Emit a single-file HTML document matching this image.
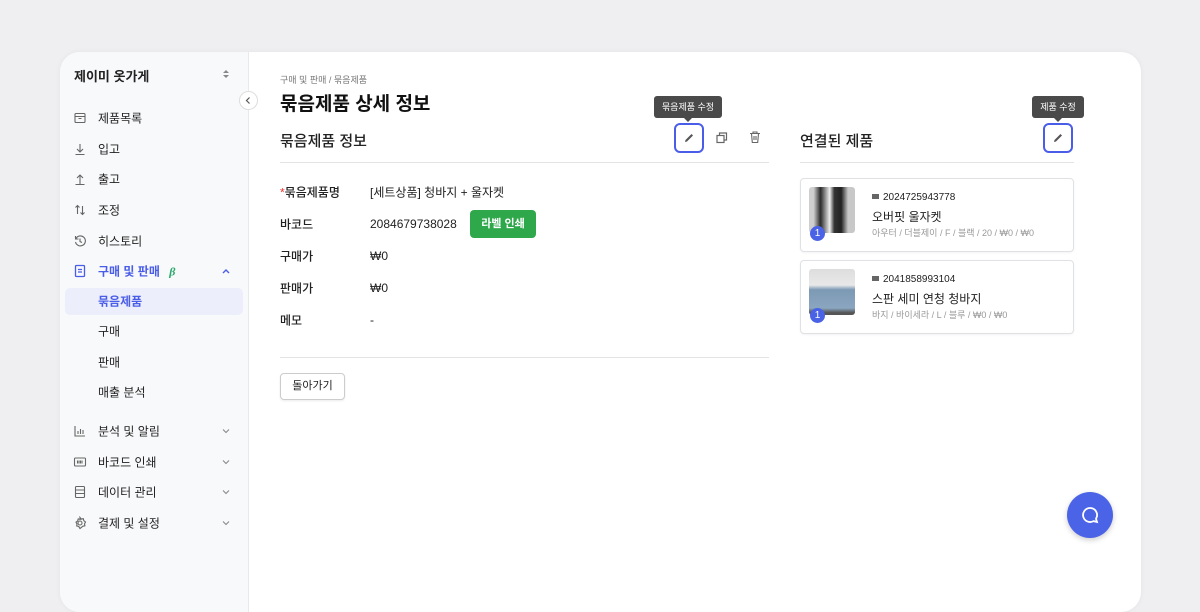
<!DOCTYPE html>
<html><head><meta charset="utf-8"><style>
*{box-sizing:border-box;margin:0;padding:0}
body{width:1200px;height:570px;overflow:hidden;background:#efeff1;font-family:"Liberation Sans","Noto Sans CJK KR",sans-serif;color:#222;position:relative}
.card{position:absolute;left:60px;top:52px;width:1081px;height:560px;background:#fff;border-radius:20px;overflow:hidden;box-shadow:0 0 6px rgba(0,0,0,.05)}
.side{position:absolute;left:0;top:0;width:189px;height:100%;background:#f8f9fb;border-right:1px solid #e8e9ec}
.abs{position:absolute;white-space:nowrap}
.mi{position:absolute;left:38px;font-size:12px;color:#222;transform:translateY(-50%)}
.ic{position:absolute;left:13px;transform:translateY(-50%)}
.chev{position:absolute;left:161px;transform:translateY(-50%)}
.lbl{position:absolute;left:220px;font-size:12px;font-weight:500;transform:translateY(-50%)}
.val{position:absolute;left:310px;font-size:12px;transform:translateY(-50%)}
.pc{position:absolute;left:740px;width:274px;height:74px;border:1px solid #dfe1e5;border-radius:4px;box-shadow:0 1px 2px rgba(0,0,0,.05)}
.img{position:absolute;left:8px;top:8px;width:46px;height:46px;border-radius:3px}
.badge{position:absolute;left:9px;top:47px;width:15px;height:15px;border-radius:50%;background:#4a62e6;color:#fff;font-size:10px;text-align:center;line-height:15px}
.tip{position:absolute;background:#4a4a4a;color:#fff;font-size:9px;border-radius:3px;height:22px;line-height:22px;text-align:center}
.tip:after{content:"";position:absolute;left:50%;bottom:-4px;margin-left:-4px;border:4px solid transparent;border-bottom:0;border-top-color:#4a4a4a}
.eb{position:absolute;width:30px;height:30px;border:2px solid #4a5de8;border-radius:6px}
svg.s path,svg.s rect,svg.s circle{fill:none;stroke:#666;stroke-width:1.1}
</style></head><body>
<div class="card">
<div class="side">
 <div class="abs" style="left:14px;top:14px;font-size:13px;font-weight:bold">제이미 옷가게</div>
 <svg class="abs" style="left:162px;top:16px" width="8" height="12" viewBox="0 0 8 12"><path d="M1 5L4 2L7 5Z M1 7L4 10L7 7Z" fill="#888"/></svg>
 <div class="mi" style="top:66px">제품목록</div><svg class="ic s" style="top:66px" width="14" height="14"><rect x="2" y="2.5" width="10" height="9" rx="1"/><path d="M2 5.5h10M5.5 7.5h3"/></svg>
 <div class="mi" style="top:97px">입고</div><svg class="ic s" style="top:97px" width="14" height="14"><path d="M7 2v8M4 7l3 3 3-3M2.5 12.5h9"/></svg>
 <div class="mi" style="top:127px">출고</div><svg class="ic s" style="top:127px" width="14" height="14"><path d="M7 12V3.5M4 6l3-3 3 3M2.5 12.5h9"/></svg>
 <div class="mi" style="top:158px">조정</div><svg class="ic s" style="top:158px" width="14" height="14"><path d="M4.5 11V2.5M2.5 4.5l2-2 2 2M9.5 3v8.5M7.5 9.5l2 2 2-2"/></svg>
 <div class="mi" style="top:189px">히스토리</div><svg class="ic s" style="top:189px" width="14" height="14"><path d="M3 4.5A5 5 0 1 1 2.5 8M2.5 2v3h3M7 4.5V7.5l2 1"/></svg>
 <div class="mi" style="top:219px;color:#4a5de8;font-weight:bold">구매 및 판매 <i style="color:#2aa86a;font-family:'Liberation Serif',serif;margin-left:6px">β</i></div>
 <svg class="ic" style="top:219px" width="14" height="14"><rect x="2.5" y="1.5" width="9" height="11" rx="1" fill="none" stroke="#4a5de8" stroke-width="1.3"/><path d="M5 5.5h4M5 8h4" stroke="#4a5de8" stroke-width="1.3"/></svg>
 <svg class="chev" style="top:219px" width="10" height="10"><path d="M2 7l3-3 3 3" fill="none" stroke="#4a5de8" stroke-width="1.4"/></svg>
 <div class="abs" style="left:5px;top:236px;width:178px;height:27px;background:#eceefb;border-radius:5px"></div>
 <div class="mi" style="top:249px;color:#4a5de8;font-weight:bold">묶음제품</div>
 <div class="mi" style="top:279px">구매</div>
 <div class="mi" style="top:310px">판매</div>
 <div class="mi" style="top:340px">매출 분석</div>
 <div class="mi" style="top:379px">분석 및 알림</div><svg class="ic s" style="top:379px" width="14" height="14"><path d="M2 2v10h10M5 10V7M7.5 10V5M10 10V6"/></svg>
 <div class="mi" style="top:410px">바코드 인쇄</div><svg class="ic s" style="top:410px" width="14" height="14"><rect x="1.5" y="3" width="11" height="8" rx="1"/><path d="M4.5 5.5v3M6 5.5v3M7.5 5.5v3M9 5.5v3"/></svg>
 <div class="mi" style="top:440px">데이터 관리</div><svg class="ic s" style="top:440px" width="14" height="14"><rect x="2.5" y="1.5" width="9" height="11" rx="1"/><path d="M2.5 5h9M2.5 8.5h9"/></svg>
 <div class="mi" style="top:471px">결제 및 설정</div><svg class="ic s" style="top:471px" width="14" height="14"><circle cx="7" cy="7" r="2"/><path d="M7 1.5l1.3 1.6 2-.4.5 2 1.7 1.3-1 1.8.4 2-2 .4L7 12.5 5.7 10.4l-2-.4.3-2-1-1.8 1.7-1.3.5-2 2 .4Z"/></svg>
 <svg class="chev" style="top:379px" width="10" height="10"><path d="M2 3.5l3 3 3-3" fill="none" stroke="#888" stroke-width="1.1"/></svg>
 <svg class="chev" style="top:410px" width="10" height="10"><path d="M2 3.5l3 3 3-3" fill="none" stroke="#888" stroke-width="1.1"/></svg>
 <svg class="chev" style="top:440px" width="10" height="10"><path d="M2 3.5l3 3 3-3" fill="none" stroke="#888" stroke-width="1.1"/></svg>
 <svg class="chev" style="top:471px" width="10" height="10"><path d="M2 3.5l3 3 3-3" fill="none" stroke="#888" stroke-width="1.1"/></svg>
</div>
<div class="abs" style="left:179px;top:39px;width:19px;height:19px;border-radius:50%;background:#fff;border:1px solid #ddd"></div>
<svg class="abs" style="left:184px;top:44px" width="9" height="9"><path d="M5.5 1.5L2.5 4.5l3 3" fill="none" stroke="#555" stroke-width="1.2"/></svg>

<div class="abs" style="left:220px;top:21px;font-size:9px;color:#777">구매 및 판매 / 묶음제품</div>
<div class="abs" style="left:220px;top:37px;font-size:19px;font-weight:bold;color:#111">묶음제품 상세 정보</div>
<div class="abs" style="left:220px;top:78px;font-size:15px;font-weight:500">묶음제품 정보</div>
<div class="abs" style="left:220px;top:110px;width:489px;height:1px;background:#e2e3e6"></div>
<div class="tip" style="left:594px;top:44px;width:68px">묶음제품 수정</div>
<div class="eb" style="left:614px;top:71px"></div>
<svg class="abs" style="left:622px;top:79px" width="14" height="14" viewBox="0 0 14 14"><path d="M3 11 L3.5 9 L9.5 3 L11 4.5 L5 10.5 Z" fill="#555"/></svg>
<svg class="abs" style="left:655px;top:79px" width="14" height="14" viewBox="0 0 14 14"><rect x="2" y="4.5" width="7" height="7" fill="none" stroke="#666" stroke-width="1.2"/><path d="M4.5 4.5V2h7v7H9" fill="none" stroke="#666" stroke-width="1.2"/></svg>
<svg class="abs" style="left:688px;top:78px" width="14" height="14" viewBox="0 0 14 14"><path d="M2 3.5h10M5 3.5V2h4v1.5M3.5 3.5l.8 9h5.4l.8-9M6 6v4M8 6v4" fill="none" stroke="#666" stroke-width="1.1"/></svg>

<div class="lbl" style="top:140px"><span style="color:#e33">*</span>묶음제품명</div><div class="val" style="top:140px">[세트상품] 청바지 + 울자켓</div>
<div class="lbl" style="top:172px">바코드</div><div class="val" style="top:172px">2084679738028</div>
<div class="abs" style="left:410px;top:158px;width:66px;height:28px;background:#2fa84b;border-radius:4px;color:#fff;font-size:11px;font-weight:bold;text-align:center;line-height:28px">라벨 인쇄</div>
<div class="lbl" style="top:204px">구매가</div><div class="val" style="top:204px">₩0</div>
<div class="lbl" style="top:236px">판매가</div><div class="val" style="top:236px">₩0</div>
<div class="lbl" style="top:268px">메모</div><div class="val" style="top:268px">-</div>
<div class="abs" style="left:220px;top:305px;width:489px;height:1px;background:#e2e3e6"></div>
<div class="abs" style="left:220px;top:321px;width:65px;height:27px;border:1px solid #ccc;border-radius:4px;font-size:11px;text-align:center;line-height:25px;box-shadow:0 1px 2px rgba(0,0,0,.08)">돌아가기</div>

<div class="abs" style="left:740px;top:78px;font-size:15px;font-weight:500">연결된 제품</div>
<div class="abs" style="left:740px;top:110px;width:274px;height:1px;background:#e2e3e6"></div>
<div class="tip" style="left:972px;top:44px;width:52px">제품 수정</div>
<div class="eb" style="left:983px;top:71px"></div>
<svg class="abs" style="left:991px;top:79px" width="14" height="14" viewBox="0 0 14 14"><path d="M3 11 L3.5 9 L9.5 3 L11 4.5 L5 10.5 Z" fill="#555"/></svg>

<div class="pc" style="top:126px"><div class="img" style="background:linear-gradient(90deg,#cfcfcf 10%,#2a2a2a 25%,#eee 45%,#333 55%,#222 70%,#c8c8c8 85%)"></div><div class="badge">1</div>
 <div class="abs" style="left:71px;top:13px;font-size:10px"><span style="display:inline-block;width:7px;height:5px;background:#666;margin-right:4px;vertical-align:1px"></span>2024725943778</div>
 <div class="abs" style="left:71px;top:29px;font-size:12px">오버핏 울자켓</div>
 <div class="abs" style="left:71px;top:47px;font-size:9px;color:#999">아우터 / 더블제이 / F / 블랙 / 20 / ₩0 / ₩0</div></div>
<div class="pc" style="top:208px"><div class="img" style="background:linear-gradient(180deg,#ddd 0%,#e8e8e8 35%,#7d9ab5 45%,#8aa5bf 85%,#555 95%),#ccc"></div><div class="badge">1</div>
 <div class="abs" style="left:71px;top:13px;font-size:10px"><span style="display:inline-block;width:7px;height:5px;background:#666;margin-right:4px;vertical-align:1px"></span>2041858993104</div>
 <div class="abs" style="left:71px;top:29px;font-size:12px">스판 세미 연청 청바지</div>
 <div class="abs" style="left:71px;top:47px;font-size:9px;color:#999">바지 / 바이세라 / L / 블루 / ₩0 / ₩0</div></div>

<div class="abs" style="left:1007px;top:440px;width:46px;height:46px;border-radius:50%;background:#4b63e6;box-shadow:0 2px 6px rgba(0,0,0,.2)"></div>
<svg class="abs" style="left:1020px;top:453px" width="20" height="20" viewBox="0 0 20 20"><path d="M10 3a7 7 0 1 0 3.5 13.1L17 17l-1-3.3A7 7 0 0 0 10 3z" fill="none" stroke="#fff" stroke-width="1.8"/></svg>
</div>
</body></html>
